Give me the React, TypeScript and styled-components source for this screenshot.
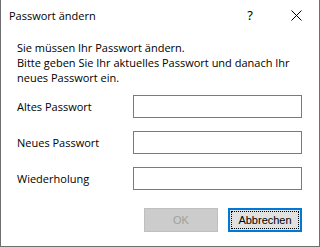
import React from "react";
import styled, { createGlobalStyle } from "styled-components";

const Global = createGlobalStyle`
  html, body { margin: 0; padding: 0; background: #ffffff; }
  * { box-sizing: border-box; }
`;

const Window = styled.div`
  width: 320px;
  height: 247px;
  background: #ffffff;
  border-left: 1px solid #6f6f6f;
  border-right: 1px solid #6f6f6f;
  border-bottom: 1px solid #6f6f6f;
  display: flex;
  flex-direction: column;
  font-family: "Open Sans", "Noto Sans", sans-serif;
  color: #000;
`;

const TitleBar = styled.div`
  height: 30px;
  display: flex;
  align-items: center;
  padding-left: 8px;
`;

const Title = styled.div`
  flex: 1;
  font-size: 11px;
  white-space: nowrap;
  padding-top: 1px;
`;

const TitleButton = styled.div`
  width: 46px;
  height: 30px;
  display: flex;
  align-items: center;
  justify-content: center;
  font-size: 13px;
  font-family: "Noto Sans", sans-serif;
`;

const Content = styled.div`
  flex: 1;
  display: flex;
  flex-direction: column;
  padding: 10px 17px 0 16px;
`;

const Message = styled.div`
  font-size: 11px;
  line-height: 15px;
  white-space: nowrap;
`;

const Form = styled.div`
  display: flex;
  flex-direction: column;
  gap: 13px;
  margin-top: 10px;
`;

const Row = styled.div`
  display: flex;
  align-items: center;
  height: 23px;
`;

const Label = styled.div`
  width: 116px;
  font-size: 11px;
  white-space: nowrap;
`;

const Input = styled.input`
  width: 169px;
  height: 23px;
  border: 1px solid #7a7a7a;
  background: #fff;
  outline: none;
  padding: 0;
`;

const Buttons = styled.div`
  display: flex;
  justify-content: flex-end;
  gap: 10px;
  margin-top: 18px;
`;

const Button = styled.button<{ $focused?: boolean }>`
  width: 74px;
  height: 24px;
  font-family: "Liberation Sans", Arial, sans-serif;
  font-size: 11px;
  padding: 0;
  position: relative;
  background: ${(p) => (p.disabled ? "#cccccc" : "#e1e1e1")};
  color: ${(p) => (p.disabled ? "#a0a0a0" : "#000")};
  border: ${(p) =>
    p.disabled ? "1px solid #bfbfbf" : p.$focused ? "2px solid #0078d7" : "1px solid #adadad"};
  &::after {
    content: "";
    display: ${(p) => (p.$focused ? "block" : "none")};
    position: absolute;
    inset: 1px;
    border: 1px dotted #000;
  }
`;

const CloseIcon = () => (
  <svg width="11" height="11" viewBox="0 0 11 11">
    <path d="M0.5 0.5 L10.5 10.5 M10.5 0.5 L0.5 10.5" stroke="#000" strokeWidth="1" fill="none" />
  </svg>
);

export default function App() {
  return (
    <>
      <Global />
      <Window>
        <TitleBar>
          <Title>Passwort ändern</Title>
          <TitleButton>?</TitleButton>
          <TitleButton>
            <CloseIcon />
          </TitleButton>
        </TitleBar>
        <Content>
          <Message>
            Sie müssen Ihr Passwort ändern.
            <br />
            Bitte geben Sie Ihr aktuelles Passwort und danach Ihr
            <br />
            neues Passwort ein.
          </Message>
          <Form>
            <Row>
              <Label>Altes Passwort</Label>
              <Input type="password" />
            </Row>
            <Row>
              <Label>Neues Passwort</Label>
              <Input type="password" />
            </Row>
            <Row>
              <Label>Wiederholung</Label>
              <Input type="password" />
            </Row>
          </Form>
          <Buttons>
            <Button disabled>OK</Button>
            <Button $focused>Abbrechen</Button>
          </Buttons>
        </Content>
      </Window>
    </>
  );
}
